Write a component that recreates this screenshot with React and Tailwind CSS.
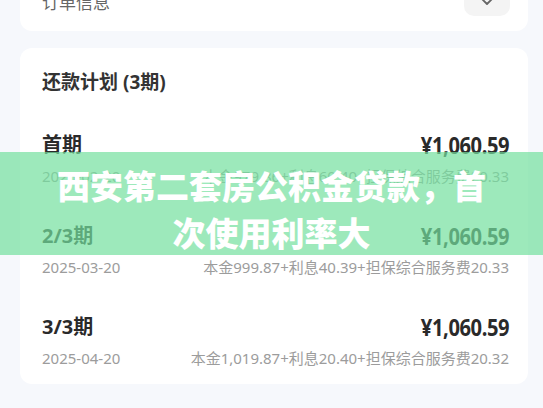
import React from "react";

const rows = [
    { title: "首期", date: "2025-02-20", detail: "本金979.86+利息60.40+担保综合服务费20.33" },
    { title: "2/3期", date: "2025-03-20", detail: "本金999.87+利息40.39+担保综合服务费20.33" },
    { title: "3/3期", date: "2025-04-20", detail: "本金1,019.87+利息20.40+担保综合服务费20.32" },
];

const font = { fontFamily: '"Noto Sans", "Noto Sans CJK SC", sans-serif' };

export default function App() {
    return (
        <div className="relative h-[408px] w-[543px] overflow-hidden bg-[#f6f8fc]" style={font}>
            {/* 订单信息 (cut off at top) */}
            <div className="ml-[20px] mt-[-25px] flex h-[56px] w-[508px] items-center justify-between rounded-[12px] bg-white pl-[22px] pr-[18px]">
                <span className="text-[17px] text-[#666]">订单信息</span>
                <div className="mt-[-6px] flex h-[32px] w-[46px] items-center justify-center rounded-[10px] bg-[#f4f4f4]">
                    <svg width="18" height="10" viewBox="0 0 18 10" fill="none" className="mt-[2px]">
                        <polyline points="2,1 9,8 16,1" stroke="#666" strokeWidth="1.8" strokeLinecap="round" strokeLinejoin="round" />
                    </svg>
                </div>
            </div>

            {/* 还款计划 */}
            <div className="ml-[20px] mt-[17px] h-[336px] w-[508px] rounded-[12px] bg-white pl-[22px] pr-[19px] pt-[20px]">
                <h3 className="text-[19px] font-bold leading-[28px] text-[#333]">还款计划 (3期)</h3>
                <div className="mt-[35px] space-y-[35px]">
                    {rows.map((r) => (
                        <div key={r.title}>
                            <div className="flex h-[28px] items-center justify-between">
                                <span className="text-[20px] font-bold text-[#2a2a2a]">{r.title}</span>
                                <span className="inline-block origin-right scale-x-[0.84] text-[24px] font-bold tracking-[-0.5px] text-[#2a2a2a]">¥1,060.59</span>
                            </div>
                            <div className="mt-[6px] flex h-[22px] items-center justify-between text-[15px] text-[#9c9c9c]">
                                <span>{r.date}</span>
                                <span>{r.detail}</span>
                            </div>
                        </div>
                    ))}
                </div>
            </div>

            {/* Green banner overlay */}
            <div className="absolute left-0 top-[152px] flex h-[103px] w-full items-center justify-center bg-[#73e09e]/70 px-[45px] pt-[10px]">
                <p
                    className="text-center text-[33px] font-black leading-[47px] text-white"
                    style={{ fontFamily: '"Noto Sans CJK SC", sans-serif' }}
                >
                    西安第二套房公积金贷款，首次使用利率大
                </p>
            </div>
        </div>
    );
}
